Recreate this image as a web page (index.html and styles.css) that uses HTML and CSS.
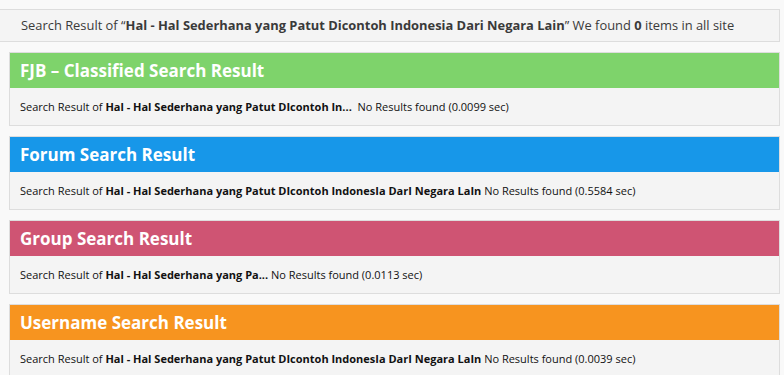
FILE: index.html
```html
<!DOCTYPE html>
<html lang="en">
<head>
  <meta charset="UTF-8" />
  <title>Search Result</title>
  <link rel="stylesheet" href="styles.css">
</head>
<body>

  <div class="page">
    <div class="summary">
      Search Result of &ldquo;<b>Hal - Hal Sederhana yang Patut Dicontoh Indonesia Dari Negara Lain</b>&rdquo; We found <b>0</b> items in all site
    </div>

    <div class="result fjb">
      <h2>FJB &ndash; Classified Search Result</h2>
      <p>Search Result of <b>Hal - Hal Sederhana yang Patut DIcontoh In...</b>&nbsp; No Results found (0.0099 sec)</p>
    </div>

    <div class="result forum">
      <h2>Forum Search Result</h2>
      <p>Search Result of <b>Hal - Hal Sederhana yang Patut DIcontoh IndonesIa DarI Negara LaIn</b> No Results found (0.5584 sec)</p>
    </div>

    <div class="result group">
      <h2>Group Search Result</h2>
      <p>Search Result of <b>Hal - Hal Sederhana yang Pa...</b> No Results found (0.0113 sec)</p>
    </div>

    <div class="result username">
      <h2>Username Search Result</h2>
      <p>Search Result of <b>Hal - Hal Sederhana yang Patut DIcontoh IndonesIa DarI Negara LaIn</b> No Results found (0.0039 sec)</p>
    </div>
  </div>

</body>
</html>
```

FILE: styles.css
```css
:root {
  --bg: #f9f9f9;
  --card: #f4f4f4;
  --line: #dddddd;
  --text: #3a3a3a;
  --green: #7ed36b;
  --blue: #1797e9;
  --pink: #cf5473;
  --orange: #f7941f;
}

* {
  box-sizing: border-box;
}

body {
  margin: 0;
  background: #ffffff;
  font-family: 'Open Sans', sans-serif;
  color: var(--text);
}

.page {
  height: 375px;
  overflow: hidden;
  padding: 9px 4px 0 9px;
  background: var(--bg);
}

.summary {
  margin: 0 0 10px -12px;
  height: 33px;
  padding: 0 0 0 23px;
  line-height: 31px;
  background: var(--card);
  border: 1px solid var(--line);
  font-size: 12.9px;
  white-space: nowrap;
}

.summary b {
  font-weight: 700;
}

.result {
  margin-bottom: 10px;
  background: var(--card);
  border: 1px solid var(--line);
}

.result h2 {
  margin: 0;
  height: 35px;
  padding: 0 10px;
  line-height: 35px;
  font-size: 17px;
  font-weight: 700;
  color: #ffffff;
}

.result p {
  margin: 0;
  height: 37px;
  padding: 0 10px;
  line-height: 37px;
  font-size: 11px;
  color: #111111;
  white-space: nowrap;
}

.result p b {
  font-weight: 700;
}

.fjb h2 { background: var(--green); }
.forum h2 { background: var(--blue); }
.group h2 { background: var(--pink); }
.username h2 { background: var(--orange); }
```
